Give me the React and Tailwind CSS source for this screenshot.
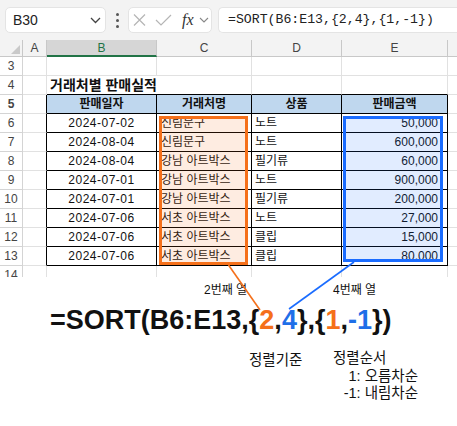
import React from 'react';

const rows = [
  ['2024-07-02', '신림문구', '노트', '50,000'],
  ['2024-08-04', '신림문구', '노트', '600,000'],
  ['2024-08-04', '강남 아트박스', '필기류', '60,000'],
  ['2024-07-01', '강남 아트박스', '노트', '900,000'],
  ['2024-07-01', '강남 아트박스', '필기류', '200,000'],
  ['2024-07-06', '서초 아트박스', '노트', '27,000'],
  ['2024-07-06', '서초 아트박스', '클립', '15,000'],
  ['2024-07-06', '서초 아트박스', '클립', '80,000'],
];

function RowHdr({ n }) {
  return (
    <div className="w-[23px] shrink-0 border-r border-b border-[#d4d4d4] bg-white text-[12px] text-[#444] flex items-center justify-center leading-none">
      {n}
    </div>
  );
}

function EmptyRow({ n }) {
  return (
    <div className="flex h-[19px] shrink-0">
      <RowHdr n={n} />
      <div className="w-[24px] shrink-0 border-r border-b border-[#e1e1e1]" />
      <div className="w-[110px] shrink-0 border-r border-b border-[#e1e1e1]" />
      <div className="w-[95px] shrink-0 border-r border-b border-[#e1e1e1]" />
      <div className="w-[90px] shrink-0 border-r border-b border-[#e1e1e1]" />
      <div className="w-[106px] shrink-0 border-r border-b border-[#e1e1e1]" />
      <div className="flex-1 border-b border-[#e1e1e1]" />
    </div>
  );
}

function DataRow({ n, r }) {
  return (
    <div className="flex h-[19px] shrink-0 text-[12px] text-[#111] leading-none">
      <RowHdr n={n} />
      <div className="w-[24px] shrink-0 border-r border-r-black border-b border-b-[#e1e1e1]" />
      <div className="w-[110px] shrink-0 border-r border-b border-black flex items-center justify-center tracking-[0.5px]">{r[0]}</div>
      <div className="w-[95px] shrink-0 border-r border-b border-black flex items-center pl-[4px] whitespace-nowrap overflow-hidden">{r[1]}</div>
      <div className="w-[90px] shrink-0 border-r border-b border-black flex items-center pl-[3px]">{r[2]}</div>
      <div className="w-[106px] shrink-0 border-r border-b border-black flex items-center justify-end pr-[9px]">{r[3]}</div>
      <div className="flex-1 border-b border-[#e1e1e1]" />
    </div>
  );
}

export default function App() {
  return (
    <div className="relative w-[457px] h-[426px] overflow-hidden bg-white font-['Liberation_Sans','Noto_Sans_CJK_KR',sans-serif]">
      {/* Toolbar */}
      <div className="h-[40px] bg-[#f3f3f3] flex items-center">
        <div className="ml-[5px] w-[101px] h-[26px] shrink-0 bg-white rounded-[5px] border border-[#e4e4e4] flex items-center justify-between pl-[7px] pr-[4px]">
          <span className="text-[14px] text-[#222] leading-none">B30</span>
          <svg width="11" height="7" viewBox="0 0 11 7" fill="none">
            <path d="M1 1 L5.5 5.5 L10 1" stroke="#444" strokeWidth="1.3" />
          </svg>
        </div>
        <div className="ml-[10px] flex flex-col gap-[3px]">
          <div className="w-[3px] h-[3px] rounded-full bg-[#555]" />
          <div className="w-[3px] h-[3px] rounded-full bg-[#555]" />
          <div className="w-[3px] h-[3px] rounded-full bg-[#555]" />
        </div>
        <div className="ml-[9px] w-[84px] h-[26px] shrink-0 bg-white rounded-[5px] border border-[#e4e4e4] flex items-center pl-[4px]">
          <svg width="13" height="12" viewBox="0 0 13 12" fill="none">
            <path d="M1 0.5 L12 11.5 M12 0.5 L1 11.5" stroke="#b5b5b5" strokeWidth="1.2" />
          </svg>
          <svg className="ml-[9px]" width="17" height="12" viewBox="0 0 17 12" fill="none">
            <path d="M1 6 L6 11 L16 1" stroke="#b5b5b5" strokeWidth="1.2" />
          </svg>
          <span className="ml-[10px] text-[16px] italic text-[#333] leading-none font-['Liberation_Serif',serif]">fx</span>
          <svg className="ml-[5px]" width="10" height="6" viewBox="0 0 10 6" fill="none">
            <path d="M1 1 L5 5 L9 1" stroke="#888" strokeWidth="1.1" />
          </svg>
        </div>
        <div className="ml-[6px] flex-1 h-[26px] bg-white rounded-l-[5px] border border-r-0 border-[#e4e4e4] flex items-center pl-[9px] text-[13.2px] text-[#222] leading-none font-['Liberation_Mono',monospace] whitespace-nowrap">
          =SORT(B6:E13,{'{'}2,4{'}'},{'{'}1,-1{'}'})
        </div>
      </div>

      {/* Sheet */}
      <div className="h-[237px] overflow-hidden flex flex-col">
        <div className="flex h-[17px] shrink-0 bg-[#f3f3f3] text-[12px] text-[#444] leading-none">
          <div className="w-[23px] shrink-0 border-r border-b border-[#c8c8c8] flex items-end justify-end pr-[2px] pb-[2px]">
            <svg width="9" height="9" viewBox="0 0 9 9"><path d="M9 0 L9 9 L0 9 Z" fill="#c9c9c9" /></svg>
          </div>
          <div className="w-[24px] shrink-0 border-r border-b border-[#c8c8c8] flex items-center justify-center">A</div>
          <div className="w-[110px] shrink-0 border-r border-r-[#c8c8c8] border-b-2 border-b-[#217346] bg-[#d6d6d6] text-[#217346] flex items-center justify-center">B</div>
          <div className="w-[95px] shrink-0 border-r border-b border-[#c8c8c8] flex items-center justify-center">C</div>
          <div className="w-[90px] shrink-0 border-r border-b border-[#c8c8c8] flex items-center justify-center">D</div>
          <div className="w-[106px] shrink-0 border-r border-b border-[#c8c8c8] flex items-center justify-center">E</div>
          <div className="flex-1 border-b border-[#c8c8c8]" />
        </div>

        <EmptyRow n={3} />

        <div className="flex h-[19px] shrink-0">
          <RowHdr n={4} />
          <div className="w-[24px] shrink-0 border-r border-b border-[#e1e1e1]" />
          <div className="w-[205px] shrink-0 border-r border-r-[#e1e1e1] border-b border-b-black flex items-center pl-[3px] text-[14px] font-bold text-[#111] leading-none whitespace-nowrap">
            거래처별 판매실적
          </div>
          <div className="w-[90px] shrink-0 border-r border-r-[#e1e1e1] border-b border-b-black" />
          <div className="w-[106px] shrink-0 border-r border-r-[#e1e1e1] border-b border-b-black" />
          <div className="flex-1 border-b border-[#e1e1e1]" />
        </div>

        <div className="flex h-[19px] shrink-0 text-[12px] font-bold text-[#111] leading-none">
          <RowHdr n={5} />
          <div className="w-[24px] shrink-0 border-r border-r-black border-b border-b-[#e1e1e1]" />
          <div className="w-[110px] shrink-0 border-r border-b border-black bg-[#bfd7ee] flex items-center justify-center">판매일자</div>
          <div className="w-[95px] shrink-0 border-r border-b border-black bg-[#bfd7ee] flex items-center justify-center">거래처명</div>
          <div className="w-[90px] shrink-0 border-r border-b border-black bg-[#bfd7ee] flex items-center justify-center">상품</div>
          <div className="w-[106px] shrink-0 border-r border-b border-black bg-[#bfd7ee] flex items-center justify-center">판매금액</div>
          <div className="flex-1 border-b border-[#e1e1e1]" />
        </div>

        {rows.map((r, i) => (
          <DataRow key={i} n={i + 6} r={r} />
        ))}

        <EmptyRow n={14} />
      </div>

      {/* Annotations */}
      <div className="pt-[5px] text-[#111]">
        <div className="flex pl-[204px] text-[12px] leading-[16px]">
          <div className="w-[129px]">2번째 열</div>
          <div>4번째 열</div>
        </div>
        <div className="mt-[9px] pl-[50px] text-[27px] leading-[27px] font-bold text-[#111] whitespace-nowrap">
          =SORT(B6:E13,{'{'}<span className="text-[#f5701a]">2</span>,<span className="text-[#1f6fe8]">4</span>{'}'},{'{'}<span className="text-[#f5701a]">1</span>,<span className="text-[#1f6fe8]">-1</span>{'}'})
        </div>
        <div className="mt-[16px] flex pl-[249px] text-[14.5px] leading-[17.5px]">
          <div className="w-[84px] pt-[2px]">정렬기준</div>
          <div className="w-[85px] flex flex-col">
            <div>정렬순서</div>
            <div className="text-right">1: 오름차순</div>
            <div className="text-right">-1: 내림차순</div>
          </div>
        </div>
      </div>

      {/* Overlay shapes */}
      <svg className="absolute inset-0 pointer-events-none" width="457" height="426" viewBox="0 0 457 426">
        <rect x="160.5" y="117.5" width="86" height="146" fill="#f5701a" fillOpacity="0.13" stroke="#f5701a" strokeWidth="3" />
        <rect x="344.5" y="117.5" width="97" height="143" fill="#1a6cff" fillOpacity="0.13" stroke="#1a6cff" strokeWidth="3" />
        <line x1="228.5" y1="265" x2="260" y2="310" stroke="#f5701a" strokeWidth="1.6" />
        <line x1="354" y1="262" x2="289" y2="309" stroke="#1a6cff" strokeWidth="1.6" />
      </svg>
    </div>
  );
}
